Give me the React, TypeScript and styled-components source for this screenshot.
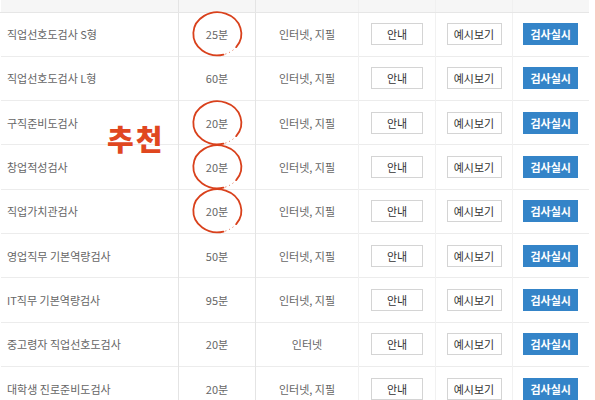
import React from "react";
import styled, { createGlobalStyle } from "styled-components";

const GlobalStyle = createGlobalStyle`
  html, body {
    margin: 0;
    padding: 0;
    background: #fff;
    overflow: hidden;
  }
  body {
    font-family: "Noto Sans CJK KR", "Noto Sans", sans-serif;
  }
`;

const Page = styled.div`
  display: flex;
  width: 600px;
  height: 400px;
  overflow: hidden;
`;

const TableWrap = styled.div`
  position: relative;
  width: 588px;
  margin-top: -24px;
`;

const Side = styled.div`
  margin-left: 7px;
  width: 5px;
  background: #f9ccc4;
`;

const Table = styled.table`
  width: 588px;
  border-collapse: collapse;
  table-layout: fixed;
`;

const HeadCell = styled.th<{ $line?: "strong" | "soft" | "none" }>`
  height: 36px;
  padding: 0;
  background: #f6f6f6;
  border-bottom: 1px solid #e6e6e6;
  border-left: 1px solid
    ${(p) => (p.$line === "strong" ? "#e4e4e4" : p.$line === "soft" ? "#f0f0f0" : "transparent")};
  font-size: 11px;
  font-weight: 400;
  color: #555;
  text-align: center;
  vertical-align: bottom;
  padding-bottom: 11px;
  box-sizing: border-box;
`;

const Row = styled.tr`
  height: 44.3px;
  border-bottom: 1px solid #ececec;
`;

const Cell = styled.td<{ $line?: "strong" | "soft" | "none"; $align?: "left" | "center" }>`
  position: relative;
  padding: 0 ${(p) => (p.$align === "left" ? "6px" : "0")};
  border-left: 1px solid
    ${(p) => (p.$line === "strong" ? "#e4e4e4" : p.$line === "soft" ? "#f1f1f1" : "transparent")};
  font-size: 11px;
  color: #666;
  text-align: ${(p) => p.$align || "center"};
  vertical-align: middle;
  white-space: nowrap;
`;

const Button = styled.span<{ $primary?: boolean; $w: number }>`
  display: inline-flex;
  align-items: center;
  justify-content: center;
  box-sizing: border-box;
  width: ${(p) => p.$w}px;
  height: 22px;
  font-size: 11px;
  font-weight: ${(p) => (p.$primary ? 700 : 400)};
  color: ${(p) => (p.$primary ? "#fff" : "#333")};
  background: ${(p) => (p.$primary ? "#3484c8" : "#fff")};
  border: 1px solid ${(p) => (p.$primary ? "#3484c8" : "#d4d4d4")};
`;

const Circle = styled.svg`
  position: absolute;
  left: 13px;
  top: 50%;
  margin-top: -23px;
  width: 51px;
  height: 45px;
  pointer-events: none;
  overflow: visible;
`;

const Badge = styled.div`
  position: absolute;
  left: 107px;
  top: 148px;
  font-size: 29px;
  font-weight: 900;
  line-height: 1;
  letter-spacing: 2px;
  color: #e0471f;
`;

type Item = { name: string; time: string; method: string; marked?: boolean };

const items: Item[] = [
  { name: "직업선호도검사 S형", time: "25분", method: "인터넷, 지필", marked: true },
  { name: "직업선호도검사 L형", time: "60분", method: "인터넷, 지필" },
  { name: "구직준비도검사", time: "20분", method: "인터넷, 지필", marked: true },
  { name: "창업적성검사", time: "20분", method: "인터넷, 지필", marked: true },
  { name: "직업가치관검사", time: "20분", method: "인터넷, 지필", marked: true },
  { name: "영업직무 기본역량검사", time: "50분", method: "인터넷, 지필" },
  { name: "IT직무 기본역량검사", time: "95분", method: "인터넷, 지필" },
  { name: "중고령자 직업선호도검사", time: "20분", method: "인터넷" },
  { name: "대학생 진로준비도검사", time: "20분", method: "인터넷, 지필" },
];

function RedCircle() {
  // hand drawn ring, open at lower right with a few dots
  return (
    <Circle viewBox="0 0 51 45">
      <path
        d="M31.5 43.6 A24 21.5 0 1 1 44.2 36.1"
        fill="none"
        stroke="#d9411c"
        strokeWidth="1.8"
        strokeLinecap="round"
      />
      <path
        d="M44.2 36.1 A24 21.5 0 0 1 31.5 43.6"
        fill="none"
        stroke="#e0603e"
        strokeWidth="1"
        strokeDasharray="1 3"
      />
    </Circle>
  );
}

export default function App() {
  return (
    <Page>
      <GlobalStyle />
      <TableWrap>
        <Table>
          <colgroup>
            <col style={{ width: 178 }} />
            <col style={{ width: 77 }} />
            <col style={{ width: 103 }} />
            <col style={{ width: 77 }} />
            <col style={{ width: 77 }} />
            <col style={{ width: 76 }} />
          </colgroup>
          <thead>
            <tr>
              <HeadCell $line="none">검사명</HeadCell>
              <HeadCell $line="strong">소요시간</HeadCell>
              <HeadCell $line="strong">검사방법</HeadCell>
              <HeadCell $line="soft">검사안내</HeadCell>
              <HeadCell $line="soft">예시보기</HeadCell>
              <HeadCell $line="soft">검사실시</HeadCell>
            </tr>
          </thead>
          <tbody>
            {items.map((it) => (
              <Row key={it.name}>
                <Cell $align="left" $line="none">
                  {it.name}
                </Cell>
                <Cell $line="strong">
                  {it.time}
                  {it.marked && <RedCircle />}
                </Cell>
                <Cell $line="strong">{it.method}</Cell>
                <Cell $line="soft">
                  <Button $w={52}>안내</Button>
                </Cell>
                <Cell $line="soft">
                  <Button $w={55}>예시보기</Button>
                </Cell>
                <Cell $line="soft">
                  <Button $w={55} $primary>
                    검사실시
                  </Button>
                </Cell>
              </Row>
            ))}
          </tbody>
        </Table>
        <Badge>추천</Badge>
      </TableWrap>
      <Side />
    </Page>
  );
}
